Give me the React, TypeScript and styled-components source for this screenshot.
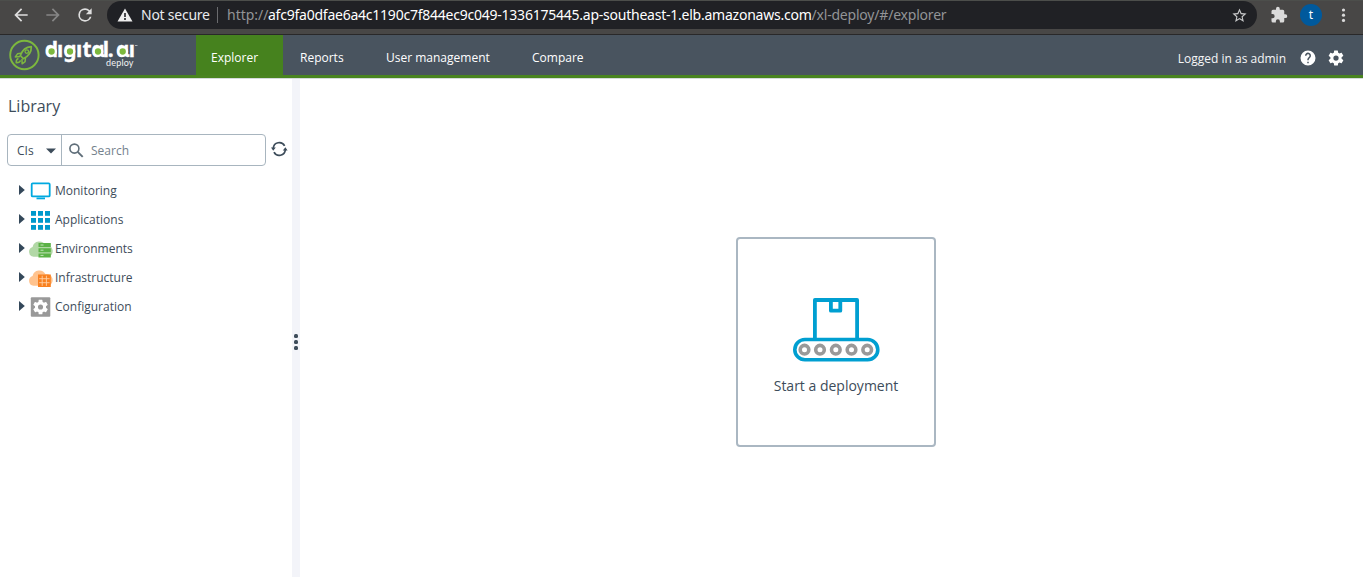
import React from 'react';
import styled, { createGlobalStyle } from 'styled-components';

const GlobalStyle = createGlobalStyle`
  * { box-sizing: border-box; }
  html, body, #root { margin: 0; height: 100%; }
  body { overflow: hidden; background: #fff; color: #3d4c5a; font: 12px/18px "Open Sans", "Noto Sans", sans-serif; }
  svg { display: block; flex: none; overflow: visible; }
`;

const Page = styled.div`
  height: 577px;
  display: flex;
  flex-direction: column;
`;

const BrowserBar = styled.div`
  height: 35px;
  flex: none;
  display: flex;
  align-items: flex-start;
  background: #484746;
  border-top: 1px solid #4c4e4b;
  border-bottom: 1px solid #292829;
`;

const BrowserButtons = styled.div`
  width: 107px;
  height: 28px;
  display: flex;
  align-items: center;
  gap: 12px;
  padding-left: 11px;
`;

const AddressBar = styled.div`
  width: 1150px;
  height: 28px;
  border-radius: 14px;
  background: #202125;
  display: flex;
  align-items: center;
  padding: 0 9px 0 10px;
  font: 14px/28px "Noto Sans", "Open Sans", sans-serif;
  color: #e4e5e6;
  white-space: nowrap;
`;

const UrlPart = styled.span<{ $width: number; $tone?: string; $spacing?: number }>`
  width: ${p => p.$width}px;
  flex: none;
  color: ${p => p.$tone ?? '#e8eaed'};
  letter-spacing: ${p => p.$spacing ?? 0}px;
`;

const AddressDivider = styled.i`
  width: 1px;
  height: 16px;
  margin: 0 9px 0 7px;
  background: #6a6b6e;
`;

const BrowserTools = styled.div`
  height: 28px;
  display: flex;
  align-items: center;
  padding-left: 13px;
`;

const Avatar = styled.span`
  width: 22px;
  height: 22px;
  margin: 0 13px 0 12px;
  border-radius: 50%;
  background: #00599c;
  color: #fff;
  text-align: center;
  font: 12px/21px "Noto Sans", sans-serif;
`;

const Header = styled.header`
  height: 43px;
  flex: none;
  display: flex;
  background: #49545f;
  border-bottom: 3px solid #498420;
`;

const Brand = styled.div`
  width: 196px;
`;

const Tab = styled.a<{ $active?: boolean; $width: number }>`
  width: ${p => p.$width}px;
  padding-left: 15px;
  font-size: 12px;
  line-height: 45px;
  height: 40px;
  color: #fff;
  background: ${p => (p.$active ? '#46821e' : 'transparent')};
`;

const Nav = styled.nav`
  display: flex;
  gap: 2px;
  flex: 1;
`;

const Account = styled.div`
  display: flex;
  align-items: center;
  padding: 7px 18px 0 0;
  color: #f5f6f7;
`;

const AccountIcon = styled.span<{ $left: number }>`
  margin: -1px 0 0 ${p => p.$left}px;
`;

const Workspace = styled.div`
  flex: 1;
  display: flex;
  border-top: 1px solid #d5dadd;
`;

const Sidebar = styled.aside`
  width: 292px;
  padding: 16px 0 0 7px;
`;

const Title = styled.h1`
  margin: 0 0 17px 1px;
  font-size: 16px;
  line-height: 22px;
  font-weight: 400;
`;

const SearchRow = styled.div`
  display: flex;
  gap: 5px;
  margin-bottom: 10px;
`;

const SearchBox = styled.div`
  width: 259px;
  height: 32px;
  display: flex;
  border: 1px solid #a8b5bf;
  border-radius: 4px;
`;

const TypeSelect = styled.div`
  width: 54px;
  display: flex;
  align-items: center;
  justify-content: space-between;
  padding: 2px 5px 0 9px;
  border-right: 1px solid #a8b5bf;
`;

const SearchField = styled.div`
  display: flex;
  align-items: center;
  gap: 8px;
  padding: 1px 0 0 7px;
  color: #74818c;
`;

const RefreshButton = styled.span`
  padding-top: 7px;
`;

const TreeRow = styled.div`
  height: 29px;
  display: flex;
  align-items: center;
  padding-left: 12px;
`;

const TreeIcon = styled.span`
  margin: 1px 3px 0 5px;
`;

const Splitter = styled.div`
  width: 8px;
  background: #f3f4f9;
  display: flex;
  flex-direction: column;
  align-items: center;
  padding-top: 255px;
  gap: 2px;
`;

const Grip = styled.i`
  width: 4px;
  height: 4px;
  border-radius: 1.5px;
  background: #3d4c5a;
`;

const Main = styled.main`
  flex: 1;
  padding: 158px 0 0 436px;
`;

const DeployCard = styled.div`
  width: 200px;
  height: 210px;
  border: 2px solid #aab7c2;
  border-radius: 4px;
  display: flex;
  flex-direction: column;
  align-items: center;
  padding-top: 58px;
  gap: 13px;
  font-size: 14px;
  line-height: 20px;
`;

const GEAR = 'M19.43 12.98c.04-.32.07-.64.07-.98s-.03-.66-.07-.98l2.11-1.65c.19-.15.24-.42.12-.64l-2-3.46c-.12-.22-.39-.3-.61-.22l-2.49 1c-.52-.4-1.08-.73-1.69-.98l-.38-2.65A.49.49 0 0 0 14 2h-4c-.25 0-.46.18-.49.42l-.38 2.65c-.61.25-1.17.59-1.69.98l-2.49-1c-.23-.09-.49 0-.61.22l-2 3.46c-.13.22-.07.49.12.64l2.11 1.65c-.04.32-.07.65-.07.98s.03.66.07.98l-2.11 1.65c-.19.15-.24.42-.12.64l2 3.46c.12.22.39.3.61.22l2.49-1c.52.4 1.08.73 1.69.98l.38 2.65c.03.24.24.42.49.42h4c.25 0 .46-.18.49-.42l.38-2.65c.61-.25 1.17-.59 1.69-.98l2.49 1c.23.09.49 0 .61-.22l2-3.46c.12-.22.07-.49-.12-.64l-2.11-1.65zM12 15.5A3.5 3.5 0 1 1 12 8.500a3.5 3.5 0 0 1 0 7z';

const Material = ({ d, size, fill }: { d: string; size: number; fill: string }) => (
  <svg width={size} height={size} viewBox="0 0 24 24" fill={fill}><path d={d} /></svg>
);

const Logo = () => (
  <svg width="196" height="40" role="img" aria-label="digital.ai deploy">
    <g fill="none" stroke="#7db83e">
      <circle cx="24.400" cy="20" r="14.200" strokeWidth="1.900" />
      <path strokeWidth="1.700" strokeLinejoin="round" d="M20.300 20.500c2-5.400 5.800-8.500 11-8.800.2 5.500-2.600 9.400-8 12z" />
      <path strokeWidth="1.500" strokeLinejoin="round" d="M21 18.200l-3.500.6-2.200 3.200 4.700-.4M25.500 22.700l-.4 3.900-3 2.200-.1-4.800M18.500 23.500c-1.700.4-2.400 2-2.300 4.300 2.300.1 3.900-.7 4.300-2.400" />
      <circle cx="26.800" cy="16.600" r="1.800" strokeWidth="1.300" />
    </g>
    <text x="44.800 57 63.300 76.100 82.500 91.300 102.800 107.800 116 128.800" y="22.300" fontFamily="Noto Sans" fontWeight="700" fontSize="21" fill="#fff" stroke="#fff" strokeWidth=".3">dıgıtɑl.ɑı</text>
    <g fill="#7db83e" stroke="#fff" strokeWidth="2.300">
      <circle cx="51.600" cy="16.500" r="4.300" />
      <circle cx="70" cy="16.500" r="4.300" />
      <circle cx="98" cy="16.500" r="4.300" />
      <circle cx="122.700" cy="16.500" r="4.300" />
    </g>
    <path d="M135 10.500h2.500" stroke="#aeb5bb" strokeWidth="1" />
    <text x="106" y="31" textLength="27.500" fontFamily="Lato" fontSize="9" fill="#f2f3f4">deploy</text>
  </svg>
);

const MonitorIcon = () => (
  <svg width="22" height="20"><rect x="1.700" y="2.400" width="18" height="13" rx="1" fill="#fff" stroke="#00a9e0" strokeWidth="1.800" /><path d="M6.500 17.400h8.500" stroke="#00a9e0" strokeWidth="1.800" /></svg>
);

const GridIcon = () => (
  <svg width="22" height="20" fill="#0099cc">
    {[1, 8, 15].map(y => [1, 8, 15].map(x => <rect key={`${x}-${y}`} x={x} y={y} width="5" height="4.800" />))}
  </svg>
);

const CLOUD = 'M3.500 17.800a5.100 5.100 0 0 1-.9-9.900A6.900 6.900 0 0 1 15.500 6.200 6 6 0 0 1 18.500 17.800z';

const EnvironmentIcon = () => (
  <svg width="22" height="20">
    <path d={CLOUD} fill="#b2d8a6" />
    <path d="M8.500 4h12.300v4H8.500zM8.500 9.200h12.300v4H8.500zM8.500 14.400h12.300v4H8.500z" fill="#5cb247" />
    <path d="M10.500 6h3M10.500 11.200h3M10.500 16.400h3" stroke="#c5e6bd" strokeWidth="1" />
  </svg>
);

const InfrastructureIcon = () => (
  <svg width="22" height="20">
    <path d={CLOUD} fill="#ffc38e" />
    <path d="M8 6.500h12.800v12.500H8z" fill="#f98120" />
    <path d="M9.200 10.700h10.400M9.200 14.700h10.400M12.200 7.700v10.200M16.400 7.700v10.200" stroke="#ffd0a5" strokeWidth=".9" />
  </svg>
);

const ConfigIcon = () => (
  <svg width="22" height="20">
    <rect x=".8" y=".3" width="19.500" height="19.500" rx="1" fill="#999" />
    <path d={GEAR} transform="translate(1.700 1.200) scale(.735)" fill="#fff" />
  </svg>
);

const ConveyorIcon = () => (
  <svg width="88" height="66" fill="none" stroke="#009fd1" strokeWidth="4">
    <path d="M22.900 41V3h42.200V41M38.900 3.500v10.200h9.400V3.500" strokeWidth="3.800" strokeLinejoin="round" />
    <rect x="2.800" y="42.500" width="83" height="20.300" rx="10.150" fill="#fff" strokeWidth="3.600" />
    {[12.500, 28, 43.800, 59.500, 75.200].map(x => <circle key={x} cx={x} cy="52.700" r="4.300" stroke="#999" strokeWidth="3.600" />)}
  </svg>
);

const tree = [
  { label: 'Monitoring', Icon: MonitorIcon },
  { label: 'Applications', Icon: GridIcon },
  { label: 'Environments', Icon: EnvironmentIcon },
  { label: 'Infrastructure', Icon: InfrastructureIcon },
  { label: 'Configuration', Icon: ConfigIcon },
];

export default function App() {
  return (
    <Page>
      <GlobalStyle />
      <BrowserBar>
        <BrowserButtons>
          <Material size={20} fill="#dedede" d="M20 11H7.830l5.590-5.590L12 4l-8 8 8 8 1.410-1.410L7.830 13H20v-2z" />
          <Material size={20} fill="#868686" d="M12 4l-1.410 1.410L16.170 11H4v2h12.170l-5.580 5.590L12 20l8-8z" />
          <Material size={20} fill="#dedede" d="M17.650 6.350A7.960 7.960 0 0 0 12 4a8 8 0 1 0 7.730 10h-2.080A6 6 0 1 1 12 6c1.660 0 3.140.69 4.220 1.780L13 11h7V4l-2.350 2.350z" />
        </BrowserButtons>
        <AddressBar>
          <svg width="24" height="20"><path d="M8 3.500L15.500 16.500H.5z" fill="#eee" /><path d="M8 8v4M8 13v2" stroke="#202125" strokeWidth="1.600" /></svg>
          <UrlPart $width={69} $spacing={-0.25}>Not secure</UrlPart>
          <AddressDivider />
          <UrlPart $width={41} $tone="#929496">http://</UrlPart>
          <UrlPart $width={543.5} $tone="#fff" $spacing={-0.235}>afc9fa0dfae6a4c1190c7f844ec9c049-1336175445.ap-southeast-1.elb.amazonaws.com</UrlPart>
          <UrlPart $width={419} $tone="#929496" $spacing={-0.2}>/xl-deploy/#/explorer</UrlPart>
          <Material size={17} fill="#c8c9ca" d="M22 9.240l-7.190-.62L12 2 9.190 8.630 2 9.240l5.460 4.730L5.820 21 12 17.270 18.180 21l-1.630-7.030L22 9.240zM12 15.400l-3.760 2.270 1-4.280-3.320-2.880 4.380-.38L12 6.100l1.710 4.040 4.380.38-3.320 2.880 1 4.280L12 15.400z" />
        </AddressBar>
        <BrowserTools>
          <Material size={18} fill="#dadada" d="M20.500 11H19V7a2 2 0 0 0-2-2h-4V3.500a2.500 2.500 0 0 0-5 0V5H4a2 2 0 0 0-2 2v3.800h1.500a2.700 2.700 0 0 1 0 5.400H2V20a2 2 0 0 0 2 2h3.800v-1.500a2.700 2.700 0 0 1 5.400 0V22H17a2 2 0 0 0 2-2v-4h1.500a2.500 2.500 0 0 0 0-5z" />
          <Avatar>t</Avatar>
          <svg width="16" height="20" fill="#dadada"><circle cx="8.500" cy="5" r="1.600" /><circle cx="8.500" cy="10.200" r="1.600" /><circle cx="8.500" cy="15.400" r="1.600" /></svg>
        </BrowserTools>
      </BrowserBar>
      <Header>
        <Brand><Logo /></Brand>
        <Nav>
          <Tab $active $width={87}>Explorer</Tab>
          <Tab $width={84}>Reports</Tab>
          <Tab $width={144}>User management</Tab>
          <Tab $width={100}>Compare</Tab>
        </Nav>
        <Account>
          Logged in as admin
          <AccountIcon $left={13}><Material size={18} fill="#fff" d="M12 2a10 10 0 1 0 0 20 10 10 0 0 0 0-20zm1 17h-2v-2h2v2zm2.070-7.750l-.9.920C13.450 12.900 13 13.500 13 15h-2v-.5c0-1.100.45-2.100 1.170-2.830l1.240-1.260A2 2 0 1 0 10 9H8a4 4 0 1 1 7.070 2.250z" /></AccountIcon>
          <AccountIcon $left={10}><Material size={18} fill="#fff" d={GEAR} /></AccountIcon>
        </Account>
      </Header>
      <Workspace>
        <Sidebar>
          <Title>Library</Title>
          <SearchRow>
            <SearchBox>
              <TypeSelect>CIs<svg width="10" height="6"><path d="M0 .5h10L5 5.500z" fill="#3d4c5a" /></svg></TypeSelect>
              <SearchField>
                <svg width="14" height="15" fill="none" stroke="#5f6e79" strokeWidth="1.600"><circle cx="5.400" cy="5.600" r="4.500" /><path d="M8.700 8.900l5 5" strokeWidth="2" /></svg>
                Search
              </SearchField>
            </SearchBox>
            <RefreshButton>
              <svg width="17" height="16" fill="none" stroke="#3d4c5a" strokeWidth="1.700"><path d="M2.300 7.200a6 6 0 0 1 11.300-2.400M14.300 8.800A6 6 0 0 1 3 11.200" /><path d="M0 6.600h4.800L2.200 9.800zM16.600 9.400h-4.800l2.600-3.200z" fill="#3d4c5a" stroke="none" /></svg>
            </RefreshButton>
          </SearchRow>
          {tree.map(({ label, Icon }) => (
            <TreeRow key={label}>
              <svg width="6" height="11"><path d="M0 0l5.800 5L0 10z" fill="#34485a" /></svg>
              <TreeIcon><Icon /></TreeIcon>
              {label}
            </TreeRow>
          ))}
        </Sidebar>
        <Splitter><Grip /><Grip /><Grip /></Splitter>
        <Main>
          <DeployCard><ConveyorIcon />Start a deployment</DeployCard>
        </Main>
      </Workspace>
    </Page>
  );
}
